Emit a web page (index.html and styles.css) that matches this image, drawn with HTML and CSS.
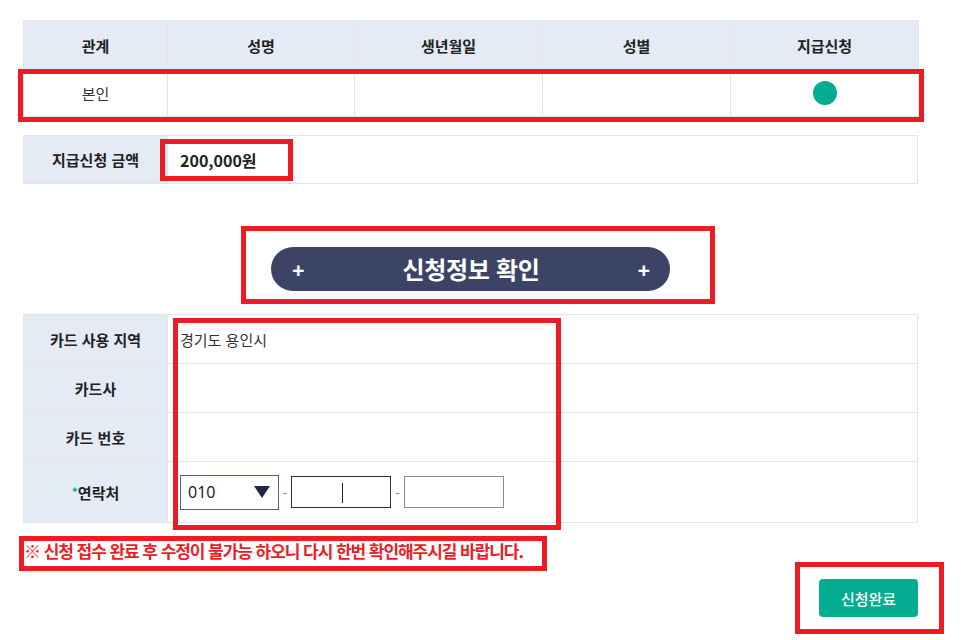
FILE: index.html
```html
<!DOCTYPE html>
<html lang="ko">
<head>
<meta charset="utf-8">
<title>지급신청</title>
<link rel="stylesheet" href="styles.css">
</head>
<body>
<div class="page">
  <table class="grid family">
    <colgroup>
      <col class="c1"><col class="c2"><col class="c3"><col class="c4"><col class="c5">
    </colgroup>
    <thead>
      <tr><th>관계</th><th>성명</th><th>생년월일</th><th>성별</th><th>지급신청</th></tr>
    </thead>
    <tbody>
      <tr><td>본인</td><td></td><td></td><td></td><td><span class="dot"></span></td></tr>
    </tbody>
  </table>

  <table class="grid amount">
    <tr><th class="label">지급신청 금액</th><td class="value">200,000원</td></tr>
  </table>

  <div class="confirm-wrap">
    <div class="confirm-bar">
      <span class="plus">+</span>
      <span class="confirm-title">신청정보 확인</span>
      <span class="plus">+</span>
    </div>
  </div>

  <table class="grid card">
    <tr><th class="label">카드 사용 지역</th><td class="value">경기도 용인시</td></tr>
    <tr><th class="label">카드사</th><td class="value"></td></tr>
    <tr><th class="label">카드 번호</th><td class="value"></td></tr>
    <tr class="phone-row">
      <th class="label"><span class="req">*</span>연락처</th>
      <td class="value">
        <div class="phone">
          <div class="select">
            <span class="sel-text">010</span>
            <svg class="sel-arrow" width="16" height="12" viewBox="0 0 16 12"><polygon points="0,0 16,0 8,12" fill="#1e2747"/></svg>
          </div>
          <span class="dash">-</span>
          <div class="field focused"><span class="caret"></span></div>
          <span class="dash dash-wide">-</span>
          <div class="field"></div>
        </div>
      </td>
    </tr>
  </table>

  <p class="warning">※ 신청 접수 완료 후 수정이 불가능 하오니 다시 한번 확인해주시길 바랍니다.</p>

  <div class="actions">
    <button class="submit" type="button">신청완료</button>
  </div>
</div>

<div class="mark m1"></div>
<div class="mark m2"></div>
<div class="mark m3"></div>
<div class="mark m4"></div>
<div class="mark m5"></div>
<div class="mark m6"></div>
</body>
</html>
```

FILE: styles.css
```css
* { box-sizing: border-box; }

html, body {
  margin: 0;
  padding: 0;
  background: #ffffff;
}

body {
  position: relative;
  width: 968px;
  height: 640px;
  overflow: hidden;
  font-family: "Noto Sans CJK KR", "Noto Sans", sans-serif;
  color: #333;
}

.page {
  width: 895px;
  margin-left: 23px;
  padding-top: 20px;
}

.grid {
  width: 895px;
  border-collapse: collapse;
  table-layout: fixed;
  border: 1px solid #e1e5ea;
}

.grid th,
.grid td {
  border: 1px solid #e1e5ea;
  padding: 0;
  font-size: 15px;
}

.grid th {
  background: #e4ebf5;
  color: #222;
  font-weight: 700;
}

.family .c1 { width: 144px; }
.family .c2 { width: 187px; }
.family .c3 { width: 188px; }
.family .c4 { width: 188px; }
.family .c5 { width: 188px; }

.family th { height: 49px; }
.family td { height: 47px; text-align: center; color: #333; }

.dot {
  display: inline-block;
  width: 24px;
  height: 24px;
  border-radius: 50%;
  background: #04ad91;
  vertical-align: middle;
}

.amount { margin-top: 18px; }
.amount th, .amount td { height: 48px; }
.label { width: 144px; text-align: center; }
.amount .value {
  padding-left: 12px;
  font-size: 16px;
  font-weight: 700;
  color: #222;
}

.confirm-wrap {
  margin-top: 63px;
  display: flex;
  justify-content: center;
}

.confirm-bar {
  width: 399px;
  height: 44px;
  border-radius: 22px;
  background: #3b4465;
  color: #fff;
  display: flex;
  align-items: center;
  justify-content: space-between;
  padding: 0 20px 0 21px;
}

.plus {
  font-size: 22px;
  font-weight: 700;
  line-height: 1;
  font-family: "Noto Sans", sans-serif;
}

.confirm-title {
  font-size: 24px;
  font-weight: 700;
  letter-spacing: -0.3px;
  line-height: 1;
}

.card { margin-top: 23px; }
.card th, .card td { height: 49px; }
.card .phone-row th, .card .phone-row td { height: 61px; }
.card .value {
  padding-left: 12px;
  color: #333;
  vertical-align: middle;
}

.req {
  color: #03ad92;
  font-size: 12px;
  vertical-align: 2px;
}

.phone {
  display: flex;
  align-items: center;
}

.select {
  flex: 0 0 99px;
  width: 99px;
  height: 35px;
  border: 1px solid #55607f;
  display: flex;
  align-items: center;
  justify-content: space-between;
  padding: 0 8px 0 7px;
}

.sel-text {
  font-family: "Open Sans", "Noto Sans", sans-serif;
  font-size: 16px;
  color: #111;
}

.sel-arrow { display: block; }

.dash {
  flex: 0 0 12px;
  width: 12px;
  text-align: center;
  color: #888;
  font-size: 13px;
}

.dash-wide { flex-basis: 13px; width: 13px; }

.field {
  position: relative;
  flex: 0 0 100px;
  width: 100px;
  height: 32px;
  border: 1px solid #8c8c8c;
  background: #fff;
}

.field.focused { border-color: #333; }

.caret {
  position: absolute;
  left: 50px;
  top: 6px;
  width: 1px;
  height: 20px;
  background: #222;
}

.warning {
  margin: 18px 0 0 1px;
  height: 20px;
  line-height: 20px;
  font-size: 17px;
  font-weight: 700;
  color: #ee1c25;
  letter-spacing: -1.05px;
  white-space: nowrap;
}

.actions {
  margin-top: 18px;
  display: flex;
  justify-content: flex-end;
}

.submit {
  width: 99px;
  height: 38px;
  border: 0;
  border-radius: 4px;
  background: #04ad91;
  color: #fff;
  font-family: "Noto Sans CJK KR", sans-serif;
  font-size: 15px;
  font-weight: 500;
  padding: 0;
}

.mark {
  position: absolute;
  border: 5px solid #ed1c24;
}
.m1 { left: 18px; top: 69px; width: 906px; height: 53px; }
.m2 { left: 160px; top: 139px; width: 133px; height: 42px; }
.m3 { left: 241px; top: 226px; width: 474px; height: 78px; }
.m4 { left: 173px; top: 318px; width: 388px; height: 212px; }
.m5 { left: 19px; top: 536px; width: 528px; height: 35px; }
.m6 { left: 795px; top: 562px; width: 149px; height: 72px; }
```
